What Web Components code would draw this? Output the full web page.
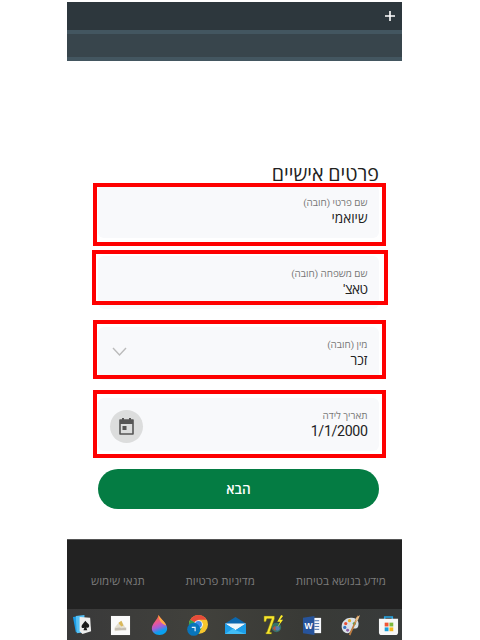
<!DOCTYPE html>
<html lang="he">
<head>
<meta charset="utf-8">
<title>פרטים אישיים</title>
<style>
html,body{margin:0;background:#fff}
body{width:480px;height:640px;overflow:hidden;font-family:Roboto,"Open Sans","Noto Sans","DejaVu Sans",sans-serif}
</style>
</head>
<body>
<signup-page></signup-page>
<script>
const define = (name, html, setup) => customElements.define(name, class extends HTMLElement {
  constructor() {
    super();
    const t = document.createElement('template');
    t.innerHTML = html;
    this.attachShadow({mode: 'open'}).append(t.content.cloneNode(true));
  }
  connectedCallback() { if (setup) setup(this); }
});

define('browser-header', `<style>
:host{display:flex;flex-direction:column;height:59px;box-sizing:border-box}
.tabs{height:28px;background:#2d373d;display:flex;justify-content:flex-end;align-items:center;padding-right:7px;box-sizing:border-box}
.line{height:4px;background:#435660}
.bar{height:23px;background:#38454c}
</style>
<div class="tabs"><svg width="10" height="10" viewBox="0 0 10 10"><path d="M5 0v10M0 5h10" stroke="#fff" stroke-width="1.6"/></svg></div>
<div class="line"></div><div class="bar"></div><div class="line"></div>`);

define('form-field', `<style>
:host{display:block;position:relative;height:53px;margin-bottom:18px;background:#f8f9fb;border-radius:6px}
.row{display:flex;justify-content:space-between;height:100%;padding:0 11.5px 0 11px;box-sizing:border-box}
.text{direction:rtl;text-align:right;padding-top:10px}
.label{font-size:9.9px;line-height:15px;color:#777;white-space:nowrap}
.value{font-size:var(--size,13.6px);line-height:16px;color:#222;white-space:nowrap;letter-spacing:var(--vs,0)}
.frame{position:absolute;inset:var(--frame);border:4px solid #fe0000}
</style>
<div class="row"><slot name="icon"><span></span></slot><div class="text"><div class="label"></div><div class="value"><slot></slot></div></div></div>
<div class="frame"></div>`, el => { el.shadowRoot.querySelector('.label').textContent = el.getAttribute('label'); });

define('pill-button', `<style>
:host{display:flex;align-items:center;justify-content:center;height:40px;border-radius:20px;background:#047c43;color:#fff;font-size:13.5px;font-weight:600;direction:rtl}
</style><slot></slot>`);

define('site-footer', `<style>
:host{display:flex;direction:rtl;justify-content:space-between;height:70px;box-sizing:border-box;padding:33px 16px 0 24px;background:#222;border-top:1px solid #555;color:#7b7b7b;font-size:11.5px;line-height:17px;white-space:nowrap}
</style><slot></slot>`);

define('task-bar', `<style>
:host{display:flex;align-items:center;justify-content:space-between;height:31px;box-sizing:border-box;padding:1px 3px 0 5px;background:linear-gradient(90deg,#39393a,#41413c 40%,#393a36 70%,#383b3b)}
svg{display:block;width:21px;height:21px;overflow:visible}
text{font-family:"Liberation Sans",sans-serif;font-weight:bold}
</style>
<svg viewBox="0 0 22 22"><path d="M1 2l8-1v16l-5 1z" fill="#1c9be5"/><path d="M4 1l9-1v18l-8 1z" fill="#55c0f5"/><path d="M8 2l11 1 1 14-9 3-3-3z" fill="#eee"/><path d="M14 6c-2 3-4 4-4 6 0 2 2 2 3 1l-1 3h4l-1-3c2 1 3 0 3-2s-3-3-4-5z" fill="#1b1b1b"/></svg>
<svg viewBox="0 0 22 22"><path d="M1 1h20v20H1z" fill="#fafafa"/><path d="M5 13l4-5 3-2 5 9-12 2z" fill="#e3ded0"/><path d="M9 8l3-2 2 5-2 1-2-2z" fill="#d9b85a"/><path d="M5 14l5-1 2 1 5-1v3H5z" fill="#c4beb3"/></svg>
<svg viewBox="0 0 22 22"><defs><linearGradient id="d" x1=".2" y1="0" x2=".5" y2="1"><stop offset=".15" stop-color="#f66b48"/><stop offset=".4" stop-color="#e8569d"/><stop offset=".62" stop-color="#a65fd8"/><stop offset=".85" stop-color="#0aa0ef"/></linearGradient></defs><path d="M10 0c2 4 9 9 9 14 0 4-3 7-8 7s-8-3-8-7c0-5 6-9 7-14z" fill="url(#d)"/><path d="M10 0c2 4 7 7 8 11-3-1-8-4-8-11z" fill="#ffab41"/></svg>
<svg viewBox="0 0 22 22"><circle cx="12" cy="10" r="10" fill="#f6c62e"/><path d="M12 10L3.4 5A10 10 0 0 1 20.7 5H12z" fill="#e64b3b"/><path d="M12 10L3.4 5A10 10 0 0 0 12 20l4-8z" fill="#2f9e50"/><circle cx="12" cy="10" r="4.6" fill="#fff"/><circle cx="12" cy="10" r="3.6" fill="#438ae9"/><circle cx="7" cy="15" r="6.8" fill="#0875bb"/><path d="M5 13h3.5v4" fill="none" stroke="#e5f5ff" stroke-width="1.2"/></svg>
<svg viewBox="0 0 22 22"><path d="M0 9l11-7 11 7v11H0z" fill="#0b67ae"/><path d="M0 9h22l-11 7z" fill="#eef6fa"/><path d="M0 9l11 7 11-7v11H0z" fill="#1c9ee9"/><path d="M0 20l9-6 2 2 11 4z" fill="#42bdf5"/></svg>
<svg viewBox="0 0 22 22"><circle cx="14" cy="13" r="5" fill="#36736a"/><circle cx="15" cy="14" r="2.6" fill="#577bb0"/><path d="M1 1h11v3L7 18h2v2H3v-2h1L9 4H4L3 7H1z" fill="#f7e62d" stroke="#6c6412" stroke-width=".5"/><path d="M19 0l-4 7h3l-3 6 6-8h-3l3-4z" fill="#ffee28"/><path d="M10 14l3-3v6z" fill="#bd523a"/></svg>
<svg viewBox="0 0 22 22"><path d="M11 3h9v16h-9z" fill="#f6f8fc"/><path d="M13 6h5M13 9h5M13 12h5M13 15h5" stroke="#3f6ba9"/><path d="M1 3l12-2v20L1 19z" fill="#27549b"/><text x="2.7" y="14.5" font-size="9" fill="#fff">W</text></svg>
<svg viewBox="0 0 22 22"><path d="M11 3c6-1 10 4 8 9-2 4-5 1-7 3-1 2-1 4-4 4-5 0-7-5-6-9 1-4 5-7 9-7z" fill="#d9e1e7"/><circle cx="6" cy="9" r="1.7" fill="#e94f35"/><circle cx="10" cy="6" r="1.7" fill="#e8ae25"/><circle cx="5" cy="13" r="1.7" fill="#3976c0"/><circle cx="15" cy="9" r="1.7" fill="#48a858"/><circle cx="8" cy="16" r="1.5" fill="#8d5fa9"/><path d="M19 1L10 21" stroke="#bc7b40" stroke-width="1.8"/><path d="M21 0l-4 3-1 5 3-3z" fill="#e7bd87"/></svg>
<svg viewBox="0 0 22 22"><path d="M7 6V2h8v4" fill="none" stroke="#27a7e5" stroke-width="1.6"/><path d="M1 4h20v14q0 3-3 3H4q-3 0-3-3z" fill="#f6f7f7"/><path d="M7 8h4v4H7z" fill="#ef5635"/><path d="M12 8h4v4h-4z" fill="#7bb83b"/><path d="M7 13h4v4H7z" fill="#179fda"/><path d="M12 13h4v4h-4z" fill="#f6b71c"/></svg>`);

define('signup-page', `<style>
:host{display:flex;flex-direction:column;width:335px;height:640px;margin-left:67px;padding-top:2px;box-sizing:border-box}
main{padding:100px 23px 0 31px;height:478px;box-sizing:border-box}
h1{direction:rtl;margin:0;font-size:19.6px;line-height:27px;height:24px;font-weight:400;color:#222;white-space:nowrap}
.chev{margin:20px 0 0 3px}
.cal{width:33px;height:33px;border-radius:50%;background:#dcdddd;display:flex;align-items:center;justify-content:center;margin:11.5px 0 0 1px}
pill-button{margin-top:-.5px}
</style>
<browser-header></browser-header>
<main>
<h1>פרטים אישיים</h1>
<form-field label="שם פרטי (חובה)" style="--frame:-2px -7px -8px -5px">שיואמי</form-field>
<form-field label="שם משפחה (חובה)" style="--frame:-6px -9px 4px -6px;--vs:-.5px">טאצ'</form-field>
<form-field label="מין (חובה)" style="--frame:-7px -7px 1px -5px"><svg class="chev" slot="icon" width="15" height="10" viewBox="0 0 15 10"><path d="M1 1l6.5 7L14 1" fill="none" stroke="#bbb" stroke-width="1.4"/></svg>זכר</form-field>
<form-field label="תאריך לידה" style="--frame:-8px -7px -7px -5px;--size:14.2px;--vs:-.35px"><div class="cal" slot="icon"><svg width="15" height="17" viewBox="0 0 15 17"><path d="M1 2h13v14H1z" fill="none" stroke="#555" stroke-width="1.6" stroke-linejoin="round"/><path d="M1 2h13v4H1zM3 0h2v3H3zM10 0h2v3h-2zM3.5 8h4v4h-4z" fill="#555"/></svg></div>1/1/2000</form-field>
<pill-button>הבא</pill-button>
</main>
<site-footer><span>מידע בנושא בטיחות</span><span>מדיניות פרטיות</span><span>תנאי שימוש</span></site-footer>
<task-bar></task-bar>`);
</script>
</body>
</html>
